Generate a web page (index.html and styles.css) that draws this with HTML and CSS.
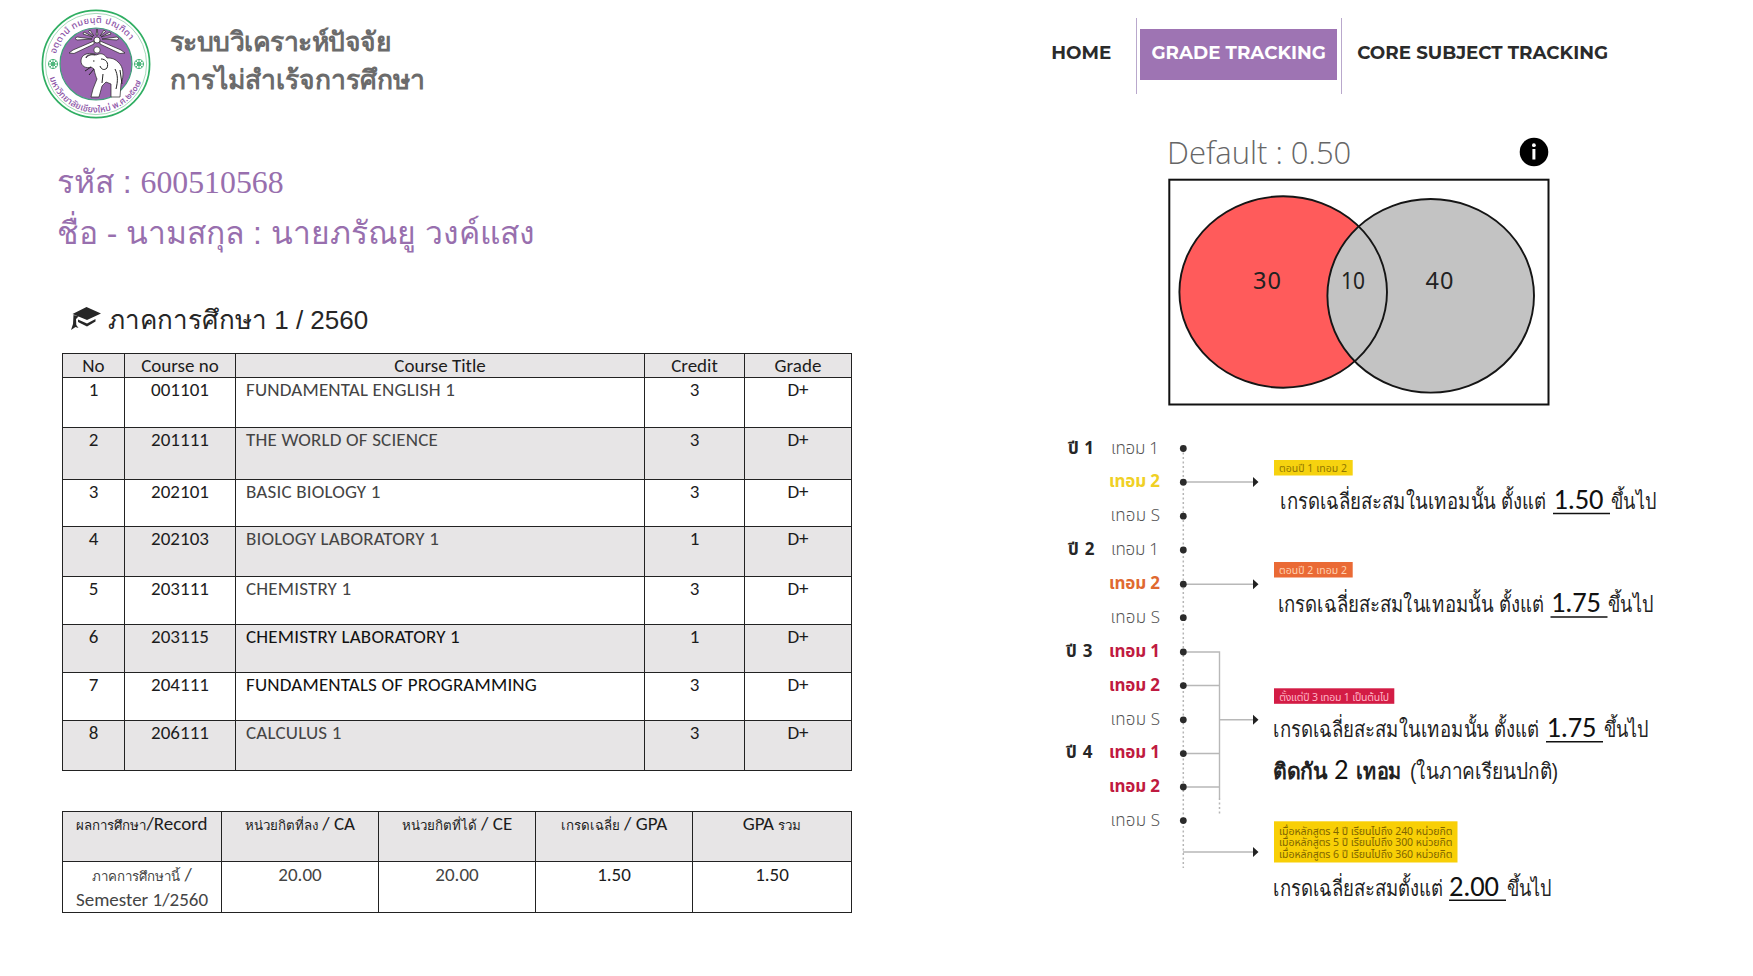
FILE: index.html
```html
<!DOCTYPE html>
<html lang="th">
<head>
<meta charset="utf-8">
<title>Grade Tracking</title>
<link rel="stylesheet" href="styles.css">
</head>
<body>
<header class="header">
  <div class="brand">
    <svg class="seal" viewBox="0 0 110 110" width="110" height="110">
      <defs>
        <path id="ring-top" d="M14.5 47A41.3 41.3 0 0 1 95.5 47"/>
        <path id="ring-bottom" d="M7 62A48.5 48.5 0 0 0 103 62"/>
      </defs>
      <circle cx="55" cy="55" r="53.6" fill="#fff" stroke="#2fae62" stroke-width="1.7"/>
      <circle cx="55" cy="55" r="50.6" fill="none" stroke="#8fd0a8" stroke-width=".8"/>
      <circle cx="55" cy="55" r="36" fill="#9a66b0" stroke="#3f9f7a" stroke-width="1.2"/>
      <text class="seal-text"><textPath href="#ring-top" startOffset="2" textLength="94">อตฺตานํ ทมยนฺติ ปณฺฑิตา</textPath></text>
      <text class="seal-text"><textPath href="#ring-bottom" startOffset="7" textLength="120">มหาวิทยาลัยเชียงใหม่ พ.ศ.๒๕๐๗</textPath></text>
      <g fill="none" stroke="#4db67a" stroke-width="1">
        <circle cx="12" cy="55" r="4.6"/><circle cx="12" cy="55" r="1.6"/><path d="M7.4 55h9.2M12 50.4v9.2M8.8 51.8l6.4 6.4M15.2 51.8l-6.4 6.4"/>
        <circle cx="98" cy="55" r="4.6"/><circle cx="98" cy="55" r="1.6"/><path d="M93.4 55h9.2M98 50.4v9.2M94.8 51.8l6.4 6.4M101.2 51.8l-6.4 6.4"/>
      </g>
      <g fill="#fff" stroke="#222" stroke-width=".7">
        <path d="M53 32L32 41l-4 3 5 .5L53 35z"/>
        <path d="M59 32l21 9 4 3-5 .5L59 35z"/>
        <path d="M51 30L36 31l-2-1.500 2-1.500zM61 30l15 1 2-1.500-2-1.500zM52 28l-9-5-1 2zM60 28l9-5 1 2zM53 27l-4-6-1.500 1.500zM59 27l4-6 1.500 1.500zM55 26l1-6 1 6z"/>
        <circle cx="56" cy="31" r="3"/>
        <circle cx="56" cy="41" r="3.200"/>
        <path d="M54 45c-8-2-14 1-14 7 0 5 5 8 10 6l3 2c1 5 2 8 3 10l-4 10-2 8h8l3-11 4-4 5 2 0 13h9l1-13c3-8 3-17-3-22-4-4-8-4-11-4-2-3-5-5-8-4l-3 1c-4-1-8 0-10 3 0-3 3-4 9-3z"/>
      </g>
      <path d="M60 50c5 0 8 4 6 9-3 3-6 1-7-2M52 52h1.500M50 58l-6 4M53 60l-5 6M61 74l1-9M74 60c3 6 3 12 1 20M79 61l2 14" fill="none" stroke="#222" stroke-width="1"/>
    </svg>
    <div class="brand-name"><div class="bn1">ระบบวิเคราะห์ปัจจัย</div><div class="bn2">การไม่สำเร้จการศึกษา</div></div>
  </div>
  <nav class="nav">
    <a class="nav-home">HOME</a>
    <div class="nav-current"><a class="nav-grade">GRADE TRACKING</a></div>
    <a class="nav-core">CORE SUBJECT TRACKING</a>
  </nav>
</header>
<main class="main">
  <section class="record">
    <div class="student">
      <div class="st1">รหัส : <span class="code">600510568</span></div>
      <div class="st2">ชื่อ - นามสกุล : นายภรัณยู วงค์แสง</div>
    </div>
    <h2 class="term">
      <svg class="cap" viewBox="0 0 30 24" width="30" height="24" fill="#262626"><path d="M15.500 0L30 6.500 16 13 1.500 7zM7 12.500l9 4 8.500-4.500v2.500L16 19.500 7 15zM2.500 8l5 1.500L5 12l.3 6 2.200 3-3-1L0 23l2-6z"/></svg>
      <span class="term-text">ภาคการศึกษา 1 / 2560</span>
    </h2>
    <table class="grid courses">
      <colgroup><col class="c1"><col class="c2"><col class="c3"><col class="c4"><col class="c5"></colgroup>
      <tr class="h24 shade"><th>No</th><th>Course no</th><th>Course Title</th><th>Credit</th><th>Grade</th></tr>
      <tr class="r1"><td>1</td><td>001101</td><td class="title">FUNDAMENTAL ENGLISH 1</td><td>3</td><td>D+</td></tr>
      <tr class="r2 shade"><td>2</td><td>201111</td><td class="title">THE WORLD OF SCIENCE</td><td>3</td><td>D+</td></tr>
      <tr class="r3"><td>3</td><td>202101</td><td class="title">BASIC BIOLOGY 1</td><td>3</td><td>D+</td></tr>
      <tr class="r4 shade"><td>4</td><td>202103</td><td class="title">BIOLOGY LABORATORY 1</td><td>1</td><td>D+</td></tr>
      <tr class="r5"><td>5</td><td>203111</td><td class="title">CHEMISTRY 1</td><td>3</td><td>D+</td></tr>
      <tr class="r6 shade"><td>6</td><td>203115</td><td class="title strong">CHEMISTRY LABORATORY 1</td><td>1</td><td>D+</td></tr>
      <tr class="r7"><td>7</td><td>204111</td><td class="title strong">FUNDAMENTALS OF PROGRAMMING</td><td>3</td><td>D+</td></tr>
      <tr class="r8 shade"><td>8</td><td>206111</td><td class="title">CALCULUS 1</td><td>3</td><td>D+</td></tr>
    </table>
    <table class="grid summary">
      <colgroup><col class="s1"><col class="s2"><col class="s2"><col class="s2"><col class="s3"></colgroup>
      <tr class="sh shade"><th><span class="th">ผลการศึกษา</span>/Record</th><th><span class="th">หน่วยกิตที่ลง</span> / CA</th><th><span class="th">หน่วยกิตที่ได้</span> / CE</th><th><span class="th">เกรดเฉลี่ย</span> / GPA</th><th>GPA <span class="th">รวม</span></th></tr>
      <tr class="sb"><td class="soft"><span class="th">ภาคการศึกษานี้</span> /<br>Semester 1/2560</td><td class="soft">20.00</td><td class="soft">20.00</td><td>1.50</td><td>1.50</td></tr>
    </table>
  </section>
  <section class="analysis">
    <div class="threshold"><span class="default">Default : 0.50</span>
      <svg class="info" viewBox="0 0 30 30" width="30" height="30"><circle cx="15" cy="15" r="14.300"/><path d="M14.900 12v10.500" stroke="#fff" stroke-width="3"/><circle cx="14.900" cy="8.200" r="1.900" fill="#fff"/></svg>
    </div>
    <svg class="venn" viewBox="1168 178 382 228" width="382" height="228">
      <rect x="1169.300" y="179.700" width="379.200" height="224.800" fill="#fff" stroke="#111" stroke-width="2"/>
      <ellipse cx="1283.200" cy="292" rx="103.800" ry="95.700" fill="#ff5b5b"/>
      <ellipse cx="1430.700" cy="295.800" rx="103.300" ry="96.800" fill="#c3c3c3"/>
      <g fill="none" stroke="#151515" stroke-width="1.900"><ellipse cx="1283.200" cy="292" rx="103.800" ry="95.700"/><ellipse cx="1430.700" cy="295.800" rx="103.300" ry="96.800"/></g>
      <g class="venn-num"><text x="1253" y="289.300" textLength="28">30</text><text x="1341" y="289.300" textLength="24" lengthAdjust="spacingAndGlyphs">10</text><text x="1425.500" y="289.300" textLength="28">40</text></g>
    </svg>
    <svg class="timeline" viewBox="1060 430 620 490" width="620" height="490">
      <path d="M1183.300 448V868M1219.500 798v17" stroke="#b5b5b5" stroke-width="1.500" stroke-dasharray="2 2.500"/>
      <path d="M1183 482h71M1183 584.300h71M1183 652h36.500v146M1183 685.500h36.500M1183 753.500h36.500M1183 787h36.500M1219.500 719.800h34M1183 852h71" fill="none" stroke="#b8b8b8" stroke-width="1.400"/>
      <path d="M1253 477v10l5.500-5zM1253 579.300v10l5.500-5zM1253 714.800v10l5.500-5zM1253 847v10l5.500-5z" fill="#222"/>
      <g fill="#2b2b2b"><circle cx="1183.300" cy="448.500" r="3.400"/><circle cx="1183.300" cy="482.200" r="3.400"/><circle cx="1183.300" cy="516.200" r="3.400"/><circle cx="1183.300" cy="550" r="3.400"/><circle cx="1183.300" cy="584.200" r="3.400"/><circle cx="1183.300" cy="617.700" r="3.400"/><circle cx="1183.300" cy="652" r="3.400"/><circle cx="1183.300" cy="685.600" r="3.400"/><circle cx="1183.300" cy="719.800" r="3.400"/><circle cx="1183.300" cy="753.600" r="3.400"/><circle cx="1183.300" cy="787" r="3.400"/><circle cx="1183.300" cy="820.600" r="3.400"/></g>
      <g class="year">
        <text x="1068" y="453.700" textLength="26">ปี 1</text><text x="1068" y="555.300" textLength="26.500">ปี 2</text><text x="1066" y="656.700" textLength="26.500">ปี 3</text><text x="1066" y="758" textLength="26.500">ปี 4</text>
      </g>
      <g class="sem">
        <text x="1111" y="453.700" textLength="48">เทอม 1</text>
        <text x="1109" y="487.300" textLength="51" class="hot yellow">เทอม 2</text>
        <text x="1110.500" y="521.300" textLength="49.500">เทอม S</text>
        <text x="1111" y="555.300" textLength="48">เทอม 1</text>
        <text x="1109" y="589" textLength="51" class="hot orange">เทอม 2</text>
        <text x="1110.500" y="623" textLength="49.500">เทอม S</text>
        <text x="1109" y="656.700" textLength="51" class="hot red">เทอม 1</text>
        <text x="1109" y="690.700" textLength="51" class="hot red">เทอม 2</text>
        <text x="1110.500" y="724.500" textLength="49.500">เทอม S</text>
        <text x="1109" y="758" textLength="51" class="hot red">เทอม 1</text>
        <text x="1109" y="792" textLength="51" class="hot red">เทอม 2</text>
        <text x="1110.500" y="825.500" textLength="49.500">เทอม S</text>
      </g>
      <rect x="1274" y="460" width="78.700" height="15.500" fill="#f6d20f"/><rect x="1274" y="562" width="78.700" height="15.500" fill="#ea6a35"/><rect x="1274" y="688.300" width="120.300" height="15.500" fill="#d31c45"/><rect x="1274" y="821.300" width="183.500" height="41.200" fill="#f8cf06"/>
      <g class="tag">
        <text x="1279" y="472.300" textLength="68" fill="#927700">ตอนปี 1 เทอม 2</text>
        <text x="1279" y="574.300" textLength="68" fill="#ffd0b0">ตอนปี 2 เทอม 2</text>
        <text x="1279" y="700.700" textLength="110" fill="#ffb5c6">ตั้งแต่ปี 3 เทอม 1 เป็นต้นไป</text>
        <g fill="#806500"><text x="1279" y="834.500" textLength="173.500">เมื่อหลักสูตร 4 ปี เรียนไปถึง 240 หน่วยกิต</text><text x="1279" y="846.300" textLength="173.500">เมื่อหลักสูตร 5 ปี เรียนไปถึง 300 หน่วยกิต</text><text x="1279" y="858.200" textLength="173.500">เมื่อหลักสูตร 6 ปี เรียนไปถึง 360 หน่วยกิต</text></g>
      </g>
      <g class="note">
        <text x="1280" y="509" textLength="266" lengthAdjust="spacingAndGlyphs">เกรดเฉลี่ยสะสมในเทอมนั้น ตั้งแต่</text><text class="num" x="1553.500" y="509" textLength="50">1.50</text><text x="1611" y="509" textLength="45" lengthAdjust="spacingAndGlyphs">ขึ้นไป</text>
        <text x="1277.500" y="612.300" textLength="266" lengthAdjust="spacingAndGlyphs">เกรดเฉลี่ยสะสมในเทอมนั้น ตั้งแต่</text><text class="num" x="1551" y="612.300" textLength="50">1.75</text><text x="1608" y="612.300" textLength="45" lengthAdjust="spacingAndGlyphs">ขึ้นไป</text>
        <text x="1273" y="737.300" textLength="266" lengthAdjust="spacingAndGlyphs">เกรดเฉลี่ยสะสมในเทอมนั้น ตั้งแต่</text><text class="num" x="1546.500" y="737.300" textLength="50">1.75</text><text x="1603.500" y="737.300" textLength="45" lengthAdjust="spacingAndGlyphs">ขึ้นไป</text>
        <text class="b" x="1273" y="778.500" textLength="54" lengthAdjust="spacingAndGlyphs">ติดกัน</text><text class="num" x="1334" y="778.500">2</text><text class="b" x="1356" y="778.500" textLength="46" lengthAdjust="spacingAndGlyphs">เทอม</text><text x="1410" y="778.500" textLength="148" lengthAdjust="spacingAndGlyphs">(ในภาคเรียนปกติ)</text>
        <text x="1273" y="896" textLength="170" lengthAdjust="spacingAndGlyphs">เกรดเฉลี่ยสะสมตั้งแต่</text><text class="num" x="1449" y="896" textLength="50">2.00</text><text x="1506.500" y="896" textLength="45" lengthAdjust="spacingAndGlyphs">ขึ้นไป</text>
      </g>
      <path d="M1553 513.500h57M1550.500 617h57M1546 741.800h57M1449 900.300h57" stroke="#111" stroke-width="1.400"/>
    </svg>
  </section>
</main>
</body>
</html>
```
FILE: styles.css
```css
* { box-sizing: border-box; }
body { margin: 0; width: 1753px; height: 976px; overflow: hidden; background: #fff; color: #222; font-family: "Noto Sans", "Noto Sans Thai", sans-serif; }
.header { display: flex; justify-content: space-between; height: 130px; padding: 9px 144px 0 40px; }
.brand { display: flex; gap: 19px; }
.seal { margin-left: .5px; }
.seal-text { font-size: 9px; fill: #8b52a6; font-weight: 500; }
.brand-name { padding-top: 14px; color: #6b6b6b; font: 700 26.500px/38px "Liberation Sans", sans-serif; white-space: nowrap; }
.bn1 { letter-spacing: -.5px; }
.nav { display: flex; height: 76px; margin-top: 9px; font-family: Montserrat, Inter, sans-serif; font-weight: 700; font-size: 18.300px; line-height: 24px; color: #2b2b2b; white-space: nowrap; }
.nav-home { padding: 23px 25px 0 0; }
.nav-current { width: 206px; padding: 11px 4px 0 3px; border: solid #b9a8cc; border-width: 0 1px; }
.nav-grade { display: block; height: 51px; padding-top: 12px; text-align: center; background: #9e74b3; color: #fff; }
.nav-core { padding: 23px 1px 0 15px; }
.main { display: flex; }
.record { width: 851px; padding: 27px 0 0 62px; }
.student { margin-left: -5px; color: #986fae; font: 31.800px/50px "Liberation Sans", sans-serif; white-space: nowrap; }
.code { font-family: "Palatino Linotype", Palatino, "Liberation Serif", serif; }
.term { display: flex; gap: 7px; height: 95px; margin: 0; padding: 49px 0 0 9px; color: #262626; font: 400 26px/36px "Liberation Sans", sans-serif; white-space: nowrap; }
.term-text { margin-top: -5px; }
.grid { width: 789px; border-collapse: collapse; table-layout: fixed; font: 19px/22px Carlito, "Liberation Sans", sans-serif; color: #1c1c1c; }
.grid th, .grid td { padding: 1px 0 0; border: 1px solid #222; font-weight: 400; text-align: center; vertical-align: top; }
.grid .title { padding-left: 10px; text-align: left; color: #444; letter-spacing: .18px; }
.grid .strong { color: #111; }
.grid .soft { color: #444; }
.shade { background: #e7e5e6; }
.c1 { width: 62px; } .c2 { width: 111px; } .c3 { width: 409px; } .c4 { width: 100px; } .c5 { width: 107px; }
.h24 { height: 24px; } .r1 { height: 50px; } .r2 { height: 52px; } .r3 { height: 47px; } .r4 { height: 50px; } .r5 { height: 48px; } .r6 { height: 48px; } .r7 { height: 48px; } .r8 { height: 50px; }
.summary { margin-top: 40px; }
.s1 { width: 159px; } .s2 { width: 157px; } .s3 { width: 159px; }
.sh { height: 50px; } .sb { height: 49px; }
.grid .sb td { line-height: 25px; padding: 0; }
.th { font-family: "Liberation Sans", sans-serif; font-size: 13.300px; line-height: 20px; }
.analysis { padding-left: 209px; }
.threshold { display: flex; justify-content: space-between; width: 489px; height: 48px; padding: 0 0 0 107px; }
.default { color: #666; font: 350 31px/44px "Open Sans", sans-serif; white-space: nowrap; }
.info { margin-top: 7px; }
.venn { display: block; margin-left: 108px; }
.venn-num { font: 23.500px "Noto Sans", sans-serif; fill: #222; }
.timeline { display: block; margin-top: 24px; }
.year { font-weight: 700; font-size: 17px; fill: #262626; }
.sem { font-weight: 300; font-size: 17px; fill: #555; }
.hot { font-weight: 700; }
.yellow { fill: #f0d024; } .orange { fill: #df6930; } .red { fill: #bf1a40; }
.tag { font-size: 10.500px; }
.note { font: 22px "Liberation Sans", sans-serif; fill: #222; }
.note .num { font: 28.500px Carlito, "Open Sans", sans-serif; fill: #111; }
.note .b { font-weight: 700; }
```
